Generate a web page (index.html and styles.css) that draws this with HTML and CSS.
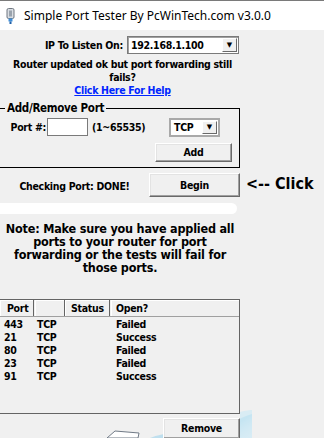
FILE: index.html
```html
<!DOCTYPE html>
<html lang="en">
<head>
<meta charset="UTF-8" />
<meta name="viewport" content="width=device-width, initial-scale=1" />
<title>Simple Port Tester</title>
<link rel="stylesheet" href="styles.css">
</head>
<body>
<header class="titlebar">
  <svg class="app-icon" width="9" height="16" viewBox="0 0 9 16" aria-hidden="true">
    <rect x="1" y="0.5" width="7" height="10" rx="1.5" fill="#d9dde2" stroke="#6f7780"/>
    <rect x="3" y="2.5" width="3" height="6" fill="#9aa3ad"/>
    <rect x="2.5" y="10.5" width="4" height="3" fill="#3f8ed8"/>
    <rect x="3.5" y="13.5" width="2" height="2.5" fill="#1f5fa8"/>
  </svg>
  <span class="title">Simple Port Tester By PcWinTech.com v3.0.0</span>
</header>

<main class="client">
  <div class="ip-row">
    <label class="ip-label">IP To Listen On:</label>
    <div class="combo ip-combo">
      <span class="combo-value">192.168.1.100</span>
      <span class="drop-btn">&#9660;</span>
    </div>
  </div>

  <p class="hint">Router updated ok but port forwarding still<br>fails?</p>
  <p class="help"><a href="#">Click Here For Help</a></p>

  <fieldset class="group">
    <legend>Add/Remove Port</legend>
    <div class="port-row">
      <label class="port-label">Port #:</label>
      <input class="port-input" type="text">
      <span class="range">(1~65535)</span>
      <div class="combo proto-combo">
        <span class="combo-value">TCP</span>
        <span class="drop-btn">&#9660;</span>
      </div>
    </div>
    <div class="add-row">
      <button class="btn add-btn" type="button">Add</button>
    </div>
  </fieldset>

  <div class="check-row">
    <span class="status">Checking Port: DONE!</span>
    <button class="btn begin-btn" type="button">Begin</button>
    <span class="click-hint">&lt;-- Click</span>
  </div>

  <div class="progress"></div>

  <p class="note">Note: Make sure you have applied all<br>ports to your router for port<br>forwarding or the tests will fail for<br>those ports.</p>

  <div class="list">
    <div class="list-head">
      <span class="h-port">Port</span>
      <span class="h-proto"></span>
      <span class="h-status">Status</span>
      <span class="h-open">Open?</span>
    </div>
    <div class="list-body">
      <div class="row"><span>443</span><span>TCP</span><span></span><span>Failed</span></div>
      <div class="row"><span>21</span><span>TCP</span><span></span><span>Success</span></div>
      <div class="row"><span>80</span><span>TCP</span><span></span><span>Failed</span></div>
      <div class="row"><span>23</span><span>TCP</span><span></span><span>Failed</span></div>
      <div class="row"><span>91</span><span>TCP</span><span></span><span>Success</span></div>
    </div>
  </div>

  <div class="remove-row">
    <button class="btn remove-btn" type="button">Remove</button>
  </div>
</main>

<!-- bits of the desktop behind the window -->
<svg class="desk-bits" width="324" height="30" viewBox="0 0 324 30" aria-hidden="true">
  <defs>
    <linearGradient id="swoosh" x1="0" y1="0" x2="1" y2="1">
      <stop offset="0" stop-color="#e4f3fa"/>
      <stop offset="0.5" stop-color="#9fd3ea"/>
      <stop offset="1" stop-color="#e9f5fb" stop-opacity="0.3"/>
    </linearGradient>
  </defs>
  <path d="M215 30 C225 18 238 10 252 6 L252 30 Z" fill="url(#swoosh)" opacity="0.8"/>
  <path d="M240 4 C244 3 248 2 252 2 L252 30 L240 30 Z" fill="#cfe9f5" opacity="0.7"/>
  <path d="M150 30 C158 27 163 26 166 26 L166 30 Z" fill="#a9d7ec" opacity="0.7"/>
  <path d="M107 30 L115 23 L139 25 L138 30 Z" fill="#ffffff" stroke="#707a86" stroke-width="1"/>
</svg>
</body>
</html>
```

FILE: styles.css
```css
/* Reset and base */
* {
  box-sizing: border-box;
}
html, body {
  margin: 0;
  padding: 0;
}
body {
  width: 324px;
  height: 438px;
  overflow: hidden;
  position: relative;
  background: #f0f0f0;
  color: #000000;
  font-family: 'DejaVu Sans', Verdana, sans-serif;
  font-stretch: condensed;
  font-weight: bold;
  font-size: 10.5px;
  letter-spacing: -0.3px;
  line-height: 13px;
}

/* Window caption */
.titlebar {
  height: 30px;
  background: #ffffff;
  border-top: 1px solid #7a7a7a;
  display: flex;
  align-items: center;
  padding-left: 6px;
  gap: 9px;
}
.app-icon {
  display: block;
  margin-top: 1px;
}
.title {
  font-family: 'Noto Sans', 'Open Sans', sans-serif;
  font-stretch: normal;
  font-weight: normal;
  font-size: 12px;
  letter-spacing: 0;
  color: #000000;
}

.client {
  padding-top: 6px;
}

/* Combo boxes */
.combo {
  display: flex;
  align-items: stretch;
  background: #ffffff;
  border: 1px solid #7a7a7a;
  box-shadow: inset 1px 1px 0 #a0a0a0;
}
.combo-value {
  flex: 1;
  padding-left: 3px;
  display: flex;
  align-items: center;
}
.drop-btn {
  width: 15px;
  margin: 1px;
  background: #f0f0f0;
  border: 1px solid;
  border-color: #ffffff #696969 #696969 #ffffff;
  font-size: 7px;
  letter-spacing: 0;
  display: flex;
  align-items: center;
  justify-content: center;
  font-stretch: normal;
}

/* IP row */
.ip-row {
  display: grid;
  grid-template-columns: 127px 112px;
  align-items: center;
}
.ip-label {
  justify-self: end;
  padding-right: 4px;
}
.ip-combo {
  height: 18px;
}

.hint, .help {
  width: 245px;
  margin: 4px 0 0;
  text-align: center;
}
.help {
  margin: 0;
}
.help a {
  color: #0026ff;
  text-decoration: underline;
}

/* Group box */
.group {
  width: 240px;
  margin: 4px 0 0;
  padding: 0 0 5px;
  border: 1px solid #000000;
  border-left: none;
}
.group legend {
  margin-left: 5px;
  padding: 0 2px;
  font-size: 11.5px;
  line-height: 14px;
}
.port-row {
  display: flex;
  align-items: center;
  margin-top: 3px;
  height: 18px;
}
.port-label {
  width: 47px;
  text-align: right;
  padding-right: 1px;
}
.port-input {
  width: 41px;
  height: 18px;
  margin: 0;
  border: 1px solid #7a7a7a;
  background: #ffffff;
}
.range {
  width: 81px;
  padding-left: 4px;
}
.proto-combo {
  width: 51px;
  height: 19px;
  border: 2px solid #a9a9a9;
  box-shadow: none;
}
.add-row {
  display: flex;
  margin-top: 7px;
  padding-left: 155px;
}

/* Push buttons */
.btn {
  margin: 0;
  padding: 0;
  font: inherit;
  letter-spacing: inherit;
  color: #000000;
  background: #f0f0f0;
  border: 1px solid;
  border-color: #ffffff #696969 #696969 #ffffff;
  box-shadow: inset -1px -1px 0 #a0a0a0, inset 1px 1px 0 #e3e3e3;
}
.add-btn {
  width: 77px;
  height: 19px;
}

/* Check row */
.check-row {
  display: flex;
  align-items: center;
  margin-top: 5px;
}
.status {
  width: 149px;
  text-align: center;
  padding-top: 2px;
}
.begin-btn {
  width: 91px;
  height: 24px;
}
.click-hint {
  margin-left: 6px;
  font-size: 16px;
  letter-spacing: 0;
  margin-top: -3px;
}

.progress {
  width: 237px;
  height: 11px;
  margin-top: 6px;
  background: #ffffff;
  border-radius: 0 6px 6px 0;
}

.note {
  width: 240px;
  margin: 8px 0 0;
  text-align: center;
  white-space: nowrap;
  font-size: 12.5px;
  letter-spacing: -0.2px;
}

/* Results list view */
.list {
  width: 240px;
  height: 115px;
  margin-top: 25px;
  border: 1px solid #646464;
  border-left: none;
}
.list-head, .row {
  display: grid;
  grid-template-columns: 35px 30px 46px 1fr;
}
.list-head {
  height: 17px;
  border-bottom: 1px solid #a0a0a0;
}
.list-head span {
  border-right: 1px solid #646464;
  box-shadow: inset 1px 1px 0 #ffffff;
  line-height: 16px;
}
.list-head span:last-child {
  border-right: none;
}
.h-port { padding-left: 7px; width: 34px; }
.h-status { padding-left: 6px; width: 45px; }
.h-open { padding-left: 5px; }
.list-body {
  padding-top: 1px;
}
.row span:nth-child(1) { padding-left: 4px; }
.row span:nth-child(2) { padding-left: 2px; }
.row span:nth-child(4) { padding-left: 5px; }

.remove-row {
  display: flex;
  padding-left: 163px;
  margin-top: 4px;
  position: relative;
  z-index: 1;
}
.remove-btn {
  width: 77px;
  height: 21px;
}

.desk-bits {
  position: absolute;
  left: 0;
  bottom: 0;
  pointer-events: none;
}
```
